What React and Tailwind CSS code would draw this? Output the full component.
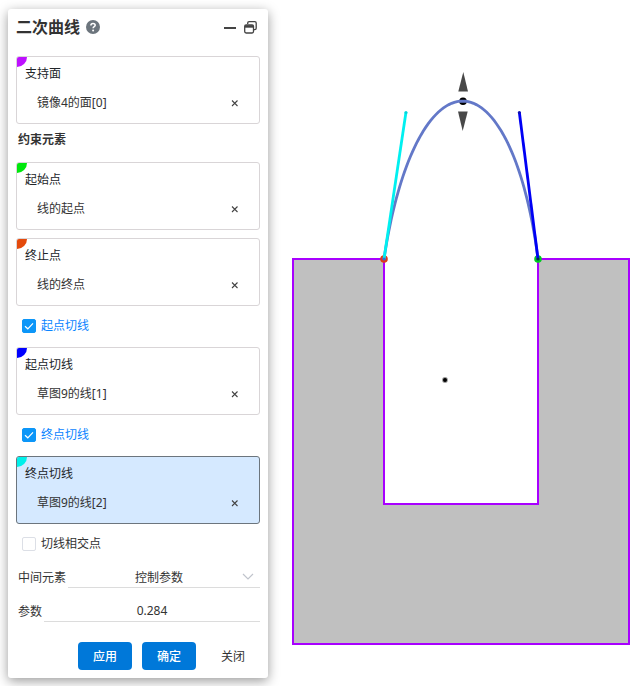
import { useState } from "react";

// tangent lines meet at APEX, rho is the conic parameter
const START = [384, 259];
const END = [538, 259];
const APEX = [466.6, -297];

function conicPath(rho) {
  const w = rho / (1 - rho);
  const points = [];

  for (let i = 0; i <= 80; i++) {
    const t = i / 80;
    const a = (1 - t) * (1 - t);
    const b = 2 * w * t * (1 - t);
    const c = t * t;
    const x = (a * START[0] + b * APEX[0] + c * END[0]) / (a + b + c);
    const y = (a * START[1] + b * APEX[1] + c * END[1]) / (a + b + c);
    points.push(`${x.toFixed(2)} ${y.toFixed(2)}`);
  }

  return `M${points.join("L")}`;
}

function PickBox({ label, value, color, active }) {
  return (
    <section
      className={`relative h-[68px] overflow-hidden rounded-[3px] border pt-[7px] ${
        active ? "border-[#6c757d] bg-[#d5e9ff]" : "border-[#d9d5d7] bg-white"
      }`}
    >
      <span className={`absolute left-0 top-0 size-[10px] rounded-br-full ${color}`} />
      <h3 className="relative px-2 leading-5 text-[#212529]">{label}</h3>
      <div className="mt-2 flex items-center justify-between pl-5 pr-[18px] leading-[22px]">
        <span>{value}</span>
        <button
          type="button"
          aria-label={`移除${value}`}
          className="flex size-3 items-center justify-center"
        >
          <svg viewBox="0 0 12 12" className="size-3" fill="none" stroke="#444" strokeWidth="1.1">
            <path d="M3 3.5l5.5 5.5M8.5 3.5L3 9" />
          </svg>
        </button>
      </div>
    </section>
  );
}

function CheckRow({ label, checked, onChange }) {
  return (
    <div className="flex h-[41px] items-center pb-px pl-[6px]">
      <label className="flex items-center gap-[5px]">
        <span className="grid">
          <input
            type="checkbox"
            checked={checked}
            onChange={(e) => onChange(e.target.checked)}
            className="col-start-1 row-start-1 size-[14px] appearance-none rounded-[2px] border border-[#dcdfe6] bg-white checked:border-[#0c96f8] checked:bg-[#0c96f8]"
          />
          {checked && (
            <svg
              viewBox="0 0 14 14"
              className="pointer-events-none col-start-1 row-start-1 size-[14px]"
              fill="none"
              stroke="#fff"
              strokeWidth="1.2"
            >
              <path d="M3 7.2l2.8 2.6L11 4.3" />
            </svg>
          )}
        </span>
        <span className={checked ? "text-[#0a84ff]" : "text-[#333]"}>{label}</span>
      </label>
    </div>
  );
}

function Viewport({ rho }) {
  return (
    <svg viewBox="276 0 368 686" className="min-w-0 flex-1" role="img" aria-label="二次曲线">
      <path
        d="M293 259H384V504H538V259H629V644H293Z"
        fill="#c0c0c0"
        stroke="#a800ff"
        strokeWidth="2"
      />
      <circle cx="463" cy="101.3" r="3.8" fill="#000" />
      <circle cx="384" cy="259" r="3.8" fill="#e03a18" />
      <circle cx="538" cy="259" r="3.8" fill="#00cc20" />
      <path d={conicPath(rho)} fill="none" stroke="#6378c8" strokeWidth="2.8" />
      <path d="M384 259L406 112" stroke="#00f0f0" strokeWidth="2.8" />
      <path d="M538 259L519.3 112" stroke="#0000f5" strokeWidth="2.8" />
      <circle cx="406" cy="112.5" r="1.5" fill="#00d5dc" />
      <circle cx="519.3" cy="112.5" r="1.5" fill="#1010b0" />
      <circle cx="384" cy="259" r="1.5" fill="#2a6fe0" />
      <circle cx="538" cy="259" r="1.6" fill="#042a50" />
      <path d="M463.3 72L468 91.5H458.3Z" fill="#484848" />
      <path d="M458 111.5H467.7L462.7 131Z" fill="#484848" />
      <circle cx="445" cy="380" r="2.9" fill="#999" />
      <circle cx="445" cy="380" r="2" fill="#000" />
    </svg>
  );
}

export default function App() {
  const [startTangent, setStartTangent] = useState(true);
  const [endTangent, setEndTangent] = useState(true);
  const [crossPoint, setCrossPoint] = useState(false);
  const [param, setParam] = useState("0.284");

  const rho = Math.min(Math.max(Number(param) || 0, 0.01), 0.99);

  return (
    <main className="flex items-start bg-white font-['Noto_Sans','Noto_Sans_CJK_SC',sans-serif] text-xs text-[#333]">
      <aside className="relative mx-2 mt-[9px] w-[260px] shrink-0 rounded-[3px] bg-white p-2 shadow-[0_3px_12px_rgba(0,0,0,0.4)]">
        <header className="flex h-[39px] items-start justify-between pr-[3px]">
          <div className="flex items-center gap-[6px]">
            <h1 className="text-base font-bold leading-5 text-[#333]">二次曲线</h1>
            <button type="button" aria-label="帮助">
              <svg viewBox="0 0 14 14" className="size-[14px]">
                <circle cx="7" cy="7" r="7" fill="#6c757d" />
                <path
                  d="M4.9 5.5C4.9 4.2 5.8 3.4 7 3.4S9.2 4.2 9.2 5.3C9.2 6.7 7.1 6.7 7.1 8.3"
                  fill="none"
                  stroke="#fff"
                  strokeWidth="1.5"
                />
                <circle cx="7.1" cy="10.4" r="1" fill="#fff" />
              </svg>
            </button>
          </div>
          <div className="flex h-5 items-center gap-2">
            <button type="button" aria-label="最小化">
              <svg viewBox="0 0 12 12" className="size-3">
                <path d="M0 7H12" stroke="#444" strokeWidth="2" />
              </svg>
            </button>
            <button type="button" aria-label="还原">
              <svg viewBox="0 0 13 13" className="size-[13px]" fill="none" stroke="#444">
                <path d="M3.7 3V2.1Q3.7 .7 5.1 .7H10.8Q12.2 .7 12.2 2.1V7.2Q12.2 8.6 10.8 8.6H10" strokeWidth="1.3" />
                <rect x=".7" y="3.8" width="8.8" height="8.2" rx="1.4" strokeWidth="1.3" />
                <path d="M1 5.4H9.2" strokeWidth="2.6" />
              </svg>
            </button>
          </div>
        </header>

        <PickBox label="支持面" value="镜像4的面[0]" color="bg-[#bd10ff]" />
        <h2 className="flex h-[38px] items-center pb-[6px] pl-[2px] font-bold">约束元素</h2>

        <div className="flex flex-col gap-2">
          <PickBox label="起始点" value="线的起点" color="bg-[#00e80c]" />
          <PickBox label="终止点" value="线的终点" color="bg-[#e44a0c]" />
        </div>

        <CheckRow label="起点切线" checked={startTangent} onChange={setStartTangent} />
        <PickBox label="起点切线" value="草图9的线[1]" color="bg-[#0000ff]" />
        <CheckRow label="终点切线" checked={endTangent} onChange={setEndTangent} />
        <PickBox label="终点切线" value="草图9的线[2]" color="bg-[#00f0ea]" active />
        <CheckRow label="切线相交点" checked={crossPoint} onChange={setCrossPoint} />

        <div className="flex h-[23px] items-end pl-[2px]">
          <label htmlFor="middle" className="mr-[2px] leading-5">
            中间元素
          </label>
          <div className="grid flex-1 items-center border-b border-[#dcdcdc]">
            <select
              id="middle"
              className="col-start-1 row-start-1 h-[22px] appearance-none pr-[10px] pt-[3px] text-center outline-none"
            >
              <option>控制参数</option>
            </select>
            <svg
              viewBox="0 0 12 12"
              className="pointer-events-none col-start-1 row-start-1 mr-[6px] size-3 justify-self-end"
              fill="none"
              stroke="#c0c4cc"
              strokeWidth="1.2"
            >
              <path d="M1 4l5 5 5-5" />
            </svg>
          </div>
        </div>

        <div className="mt-[10px] flex h-6 items-end pl-[2px]">
          <label htmlFor="param" className="mr-[2px] leading-5">
            参数
          </label>
          <input
            id="param"
            type="text"
            value={param}
            onChange={(e) => setParam(e.target.value)}
            className="h-6 min-w-0 flex-1 border-b border-[#dcdcdc] pt-[2px] text-center outline-none"
          />
        </div>

        <footer className="mt-5 flex justify-end gap-[10px]">
          <button type="button" className="h-7 w-[54px] rounded bg-[#0078d9] pt-[2px] font-medium text-white">
            应用
          </button>
          <button type="button" className="h-7 w-[54px] rounded bg-[#0078d9] pt-[2px] font-medium text-white">
            确定
          </button>
          <button type="button" className="h-7 w-[54px] rounded pt-[2px]">
            关闭
          </button>
        </footer>
      </aside>

      <Viewport rho={rho} />
    </main>
  );
}
